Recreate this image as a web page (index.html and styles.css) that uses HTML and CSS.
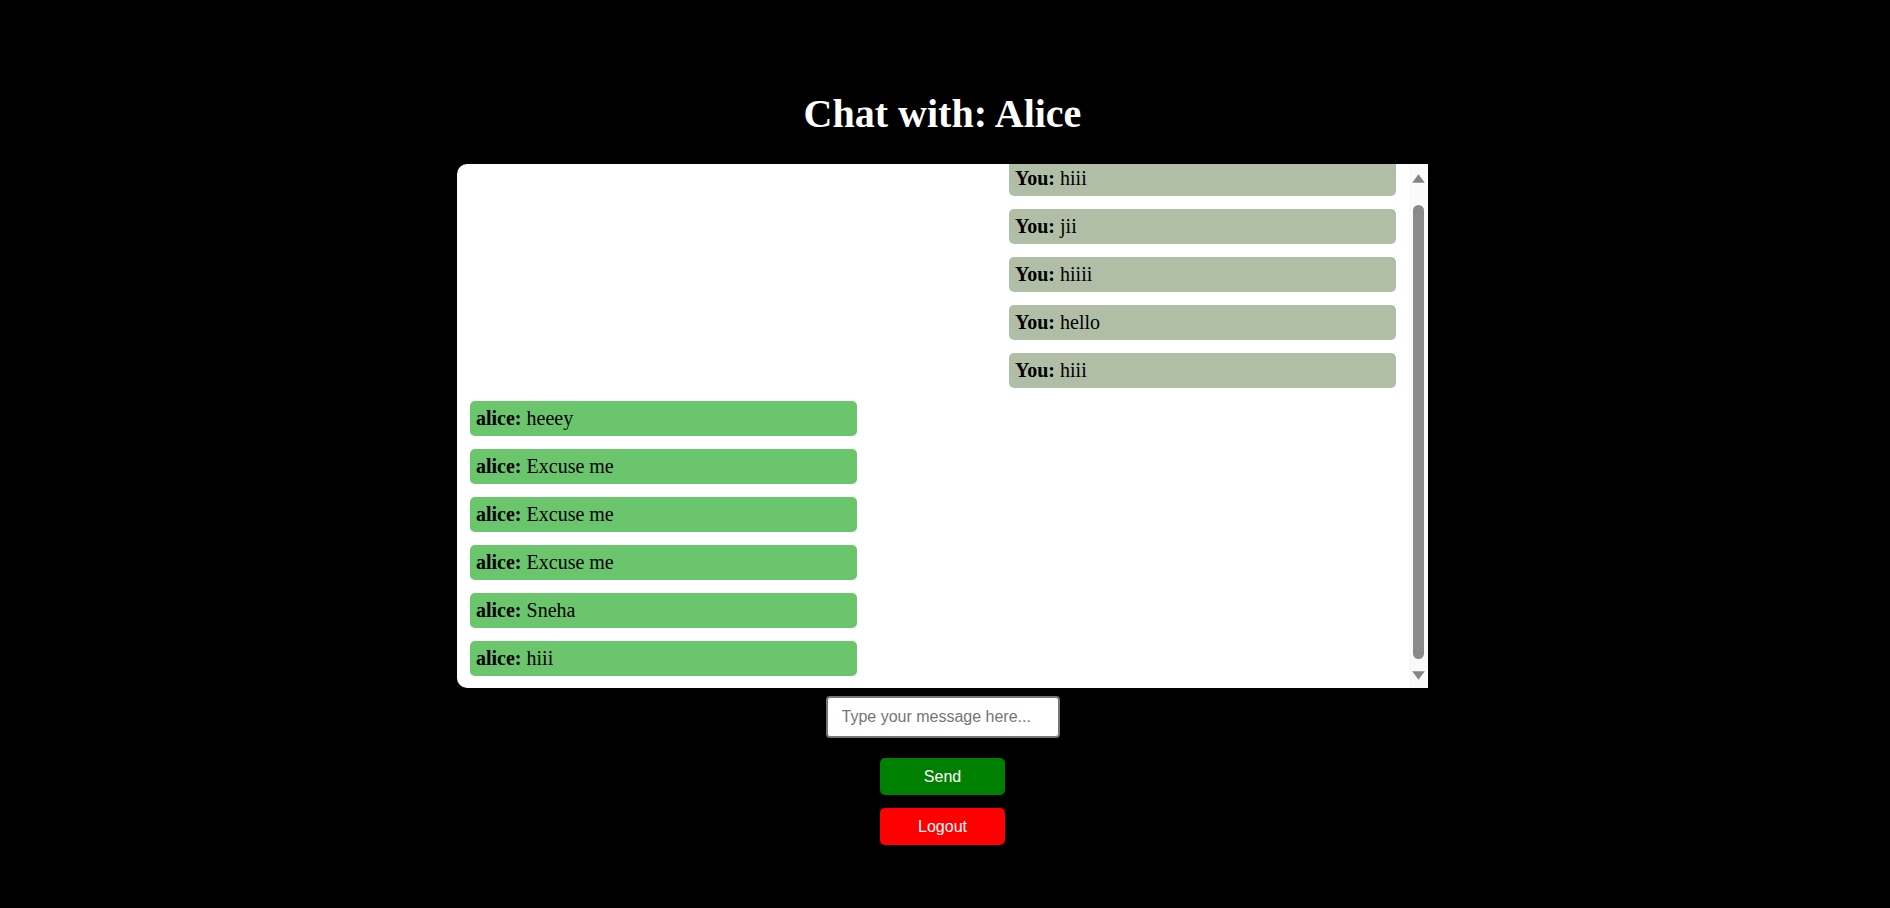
FILE: index.html
```html
<!DOCTYPE html>
<html lang="en">
<head>
<meta charset="utf-8">
<title>Chat with: Alice</title>
<link rel="stylesheet" href="styles.css">
</head>
<body>
<main class="page">
  <h1 class="title">Chat with: Alice</h1>
  <section class="chat">
    <div class="messages">
      <div class="msg msg-you"><strong>You:</strong> hiii</div>
      <div class="msg msg-you"><strong>You:</strong> jii</div>
      <div class="msg msg-you"><strong>You:</strong> hiiii</div>
      <div class="msg msg-you"><strong>You:</strong> hello</div>
      <div class="msg msg-you"><strong>You:</strong> hiii</div>
      <div class="msg msg-alice"><strong>alice:</strong> heeey</div>
      <div class="msg msg-alice"><strong>alice:</strong> Excuse me</div>
      <div class="msg msg-alice"><strong>alice:</strong> Excuse me</div>
      <div class="msg msg-alice"><strong>alice:</strong> Excuse me</div>
      <div class="msg msg-alice"><strong>alice:</strong> Sneha</div>
      <div class="msg msg-alice"><strong>alice:</strong> hiii</div>
    </div>
    <div class="scrollbar" aria-hidden="true">
      <svg class="arrow arrow-up" width="13" height="9" viewBox="0 0 13 9"><path d="M6.5 0.3 L12.8 8.8 L0.2 8.8 Z"/></svg>
      <div class="thumb"></div>
      <svg class="arrow arrow-down" width="13" height="9" viewBox="0 0 13 9"><path d="M0.2 0.2 L12.8 0.2 L6.5 8.7 Z"/></svg>
    </div>
  </section>
  <input class="composer" type="text" placeholder="Type your message here...">
  <button class="btn btn-send" type="button">Send</button>
  <button class="btn btn-logout" type="button">Logout</button>
</main>
</body>
</html>
```

FILE: styles.css
```css
* {
  box-sizing: border-box;
}

html,
body {
  margin: 0;
  padding: 0;
  background: #000;
}

body {
  font-family: "Liberation Serif", "Times New Roman", serif;
  color: #000;
}

.page {
  display: flex;
  flex-direction: column;
  align-items: center;
  padding: 91px 5px 0 0;
  min-height: 908px;
}

.title {
  margin: 0 0 27px;
  font-family: "Liberation Serif", "Times New Roman", serif;
  font-size: 40px;
  line-height: 46px;
  font-weight: bold;
  color: #fff;
}

.chat {
  display: flex;
  width: 971px;
  height: 524px;
  background: #fff;
  border-radius: 10px 0 0 10px;
  overflow: hidden;
}

.messages {
  flex: 1;
  display: flex;
  flex-direction: column;
  justify-content: flex-end;
  gap: 13px;
  padding: 12px 13px;
  overflow: hidden;
}

.msg {
  flex-shrink: 0;
  width: 387px;
  height: 35px;
  padding: 6px;
  border-radius: 5px;
  font-size: 20px;
  line-height: 23px;
  white-space: nowrap;
}

.msg strong {
  font-weight: bold;
}

.msg-you {
  align-self: flex-end;
  background: #b0bea6;
}

.msg-alice {
  align-self: flex-start;
  background: #6ac56d;
}

.scrollbar {
  width: 19px;
  flex-shrink: 0;
  display: flex;
  flex-direction: column;
  align-items: center;
  background: #fafafa;
}

.arrow {
  display: block;
  fill: #858585;
}

.arrow-up {
  margin-top: 10px;
}

.thumb {
  width: 11px;
  height: 454px;
  margin-top: 22px;
  border-radius: 6px;
  background: #8a8a8a;
}

.arrow-down {
  margin-top: 12px;
}

.composer {
  width: 234px;
  height: 42px;
  margin-top: 8px;
  padding: 0 14px;
  border: 2px solid #767676;
  border-radius: 4px;
  background: #fff;
  font-family: "Liberation Sans", Arial, sans-serif;
  font-size: 16px;
  color: #000;
  outline: none;
}

.composer::placeholder {
  color: #757575;
}

.btn {
  width: 125px;
  height: 37px;
  padding: 0;
  border: none;
  border-radius: 5px;
  font-family: "Liberation Sans", Arial, sans-serif;
  font-size: 16px;
  color: #fff;
  cursor: pointer;
}

.btn-send {
  margin-top: 20px;
  background: #008000;
}

.btn-logout {
  margin-top: 13px;
  background: #ff0000;
}
```
